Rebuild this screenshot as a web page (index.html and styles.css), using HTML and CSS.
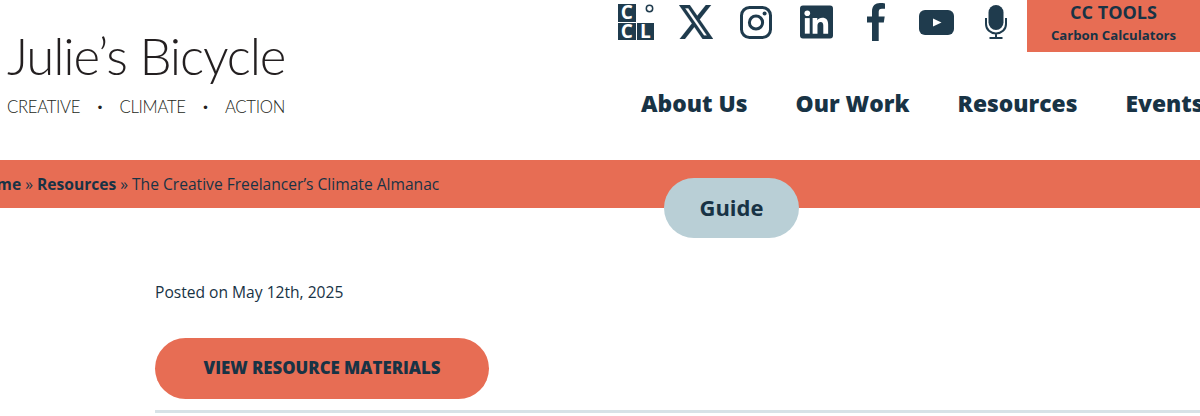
FILE: index.html
```html
<!DOCTYPE html>
<html lang="en">
<head>
    <meta charset="UTF-8">
    <meta name="viewport" content="width=device-width, initial-scale=1.0">
    <title>The Creative Freelancer's Climate Almanac</title>
    <link rel="stylesheet" href="styles.css">
</head>
<body>
    <header class="site-header">
        <a class="logo" href="#">
            <span class="logo-name">Julie’s Bicycle</span>
            <span class="logo-tag"><span>CREATIVE</span><i>•</i><span>CLIMATE</span><i>•</i><span>ACTION</span></span>
        </a>
        <div class="header-right">
            <div class="top-row">
                <div class="social">
                    <a href="#">
                        <span class="ccl">
                            <span class="ccl-cell">C</span>
                            <span class="ccl-cell ccl-empty"><svg width="9" height="9" viewBox="0 0 9 9"><circle cx="4.500" cy="4.500" r="3.200" fill="none" stroke="#1f3b4d" stroke-width="1.500"/></svg></span>
                            <span class="ccl-cell">C</span>
                            <span class="ccl-cell">L</span>
                        </span>
                    </a>
                    <a href="#"><svg width="34" height="34" viewBox="1.250 2.250 21.500 19.500" preserveAspectRatio="none"><path fill="#1f3b4d" stroke="#1f3b4d" stroke-width=".1" d="M18.244 2.250h3.308l-7.227 8.260 8.502 11.240H16.170l-5.214-6.817L4.990 21.750H1.680l7.730-8.835L1.254 2.250H8.080l4.713 6.231zm-1.161 17.520h1.833L7.084 4.126H5.117z"/></svg></a>
                    <a href="#"><svg width="32" height="33" viewBox="0 0 32 33"><rect x="1.500" y="1.500" width="29" height="30" rx="8" fill="none" stroke="#1f3b4d" stroke-width="3"/><circle cx="16" cy="16.500" r="6.600" fill="none" stroke="#1f3b4d" stroke-width="3"/><circle cx="24.600" cy="7.600" r="2" fill="#1f3b4d"/></svg></a>
                    <a href="#"><svg width="33" height="34" viewBox="0 0 34 34"><rect width="34" height="34" rx="3" fill="#1f3b4d"/><rect x="5" y="13" width="5" height="16" fill="#fff"/><circle cx="7.500" cy="8" r="2.900" fill="#fff"/><path fill="#fff" d="M13 13h4.800v2.300c1-1.600 2.800-2.700 5.100-2.700 4.400 0 6.100 2.700 6.100 7V29h-5v-8.300c0-2.200-.7-3.800-2.700-3.800-2.100 0-3.300 1.500-3.300 3.800V29h-5z"/></svg></a>
                    <a href="#"><svg width="18" height="38" viewBox="0 0 18 38"><path fill="#1f3b4d" d="M5 38V19.500H0V13.500h5V8.500C5 2.800 8.300 0 13 0c1.900 0 3.800.2 5 .4v5.300h-3c-2.600 0-3.300 1.200-3.300 3.300v4.500h6l-.9 6h-5.100V38z"/></svg></a>
                    <a href="#"><svg width="35" height="25" viewBox="0 0 35 25"><rect width="35" height="25" rx="6" fill="#1f3b4d"/><path fill="#fff" d="M14 8.500l8.500 4-8.500 4z"/></svg></a>
                    <a href="#"><svg width="22" height="34" viewBox="0 0 22 34"><rect x="3.500" y="0" width="15" height="25" rx="7.500" fill="#1f3b4d"/><path fill="none" stroke="#1f3b4d" stroke-width="2" d="M1 13v6c0 5.500 4.500 9.500 10 9.500S21 24.500 21 19v-6M11 28.500V33M4.500 33h13"/></svg></a>
                </div>
                <a class="cc-tools" href="#">
                    <span class="cc-title">CC TOOLS</span>
                    <span class="cc-sub">Carbon Calculators</span>
                </a>
            </div>
            <nav class="main-nav">
                <a href="#">About Us</a>
                <a href="#">Our Work</a>
                <a href="#">Resources</a>
                <a href="#">Events</a>
            </nav>
        </div>
    </header>

    <div class="breadcrumb-bar">
        <p class="breadcrumbs"><a href="#">Home</a> » <a href="#">Resources</a> » The Creative Freelancer’s Climate Almanac</p>
        <span class="type-pill">Guide</span>
    </div>

    <main class="content">
        <p class="posted">Posted on May 12th, 2025</p>
        <a class="btn" href="#">VIEW RESOURCE MATERIALS</a>
        <hr class="divider">
    </main>
</body>
</html>
```

FILE: styles.css
```css
html, body {
    margin: 0;
    height: 416px;
    overflow: hidden;
}
body {
    font-family: "Open Sans", Arial, sans-serif;
    color: #183345;
    background-color: #fff;
    width: 1200px;
}
a {
    color: inherit;
    text-decoration: none;
}
.site-header {
    display: flex;
    height: 160px;
}
.logo {
    width: 606px;
    flex: none;
    padding: 25px 0 0 7px;
    box-sizing: border-box;
    display: flex;
    flex-direction: column;
    font-family: Lato, "Liberation Sans", sans-serif;
    color: #231f20;
}
.logo-name {
    font-size: 51px;
    line-height: 62px;
    font-weight: 300;
    letter-spacing: -1.15px;
}
.logo-tag {
    display: flex;
    width: 278px;
    justify-content: space-between;
    margin-top: 9px;
    font-size: 16.7px;
    line-height: 22px;
    font-weight: 300;
    letter-spacing: -0.3px;
}
.logo-tag i {
    font-style: normal;
    font-size: 12px;
}
.header-right {
    width: 594px;
    flex: none;
}
.top-row {
    display: flex;
    height: 52px;
    justify-content: space-between;
}
.social {
    display: grid;
    grid-template-columns: repeat(7, 60px);
    align-items: center;
    justify-items: center;
    padding-bottom: 8px;
}
.social a {
    display: flex;
}
.ccl {
    display: grid;
    grid-template-columns: 17.5px 17.5px;
    grid-auto-rows: 17.5px;
    gap: 1px;
}
.ccl-cell {
    background-color: #1f3b4d;
    color: #fff;
    font-size: 19px;
    font-weight: 700;
    line-height: 17.5px;
    text-align: center;
}
.ccl-empty {
    background: none;
    display: flex;
    justify-content: flex-end;
}
.cc-tools {
    width: 173px;
    background-color: #e76d54;
    display: flex;
    flex-direction: column;
    align-items: center;
}
.cc-title {
    font-size: 18px;
    font-weight: 700;
    line-height: 24px;
}
.cc-sub {
    font-size: 13.2px;
    font-weight: 700;
    line-height: 22px;
}
.main-nav {
    display: flex;
    gap: 48px;
    padding: 35px 0 0 35px;
    white-space: nowrap;
}
.main-nav a {
    font-size: 22.8px;
    font-weight: 800;
    line-height: 34px;
}
.breadcrumb-bar {
    position: relative;
    height: 48px;
    background-color: #e76d54;
    display: flex;
    align-items: center;
}
.breadcrumbs {
    margin: 0 0 0 -25px;
    font-size: 15.6px;
    white-space: nowrap;
}
.breadcrumbs a {
    font-weight: 700;
}
.type-pill {
    position: absolute;
    left: 664px;
    top: 18px;
    width: 135px;
    height: 60px;
    border-radius: 30px;
    background-color: #b9cfd6;
    font-size: 22px;
    font-weight: 700;
    line-height: 59px;
    text-align: center;
}
.content {
    padding: 72px 0 0 155px;
}
.posted {
    margin: 0;
    font-size: 15.6px;
    line-height: 24px;
}
.btn {
    display: block;
    width: 334px;
    height: 61px;
    margin-top: 34px;
    border-radius: 31px;
    background-color: #e76d54;
    font-size: 16.8px;
    font-weight: 800;
    line-height: 60px;
    text-align: center;
}
.divider {
    margin: 11px 0 0;
    height: 3px;
    border: 0;
    background-color: #d7e2e7;
}
```
